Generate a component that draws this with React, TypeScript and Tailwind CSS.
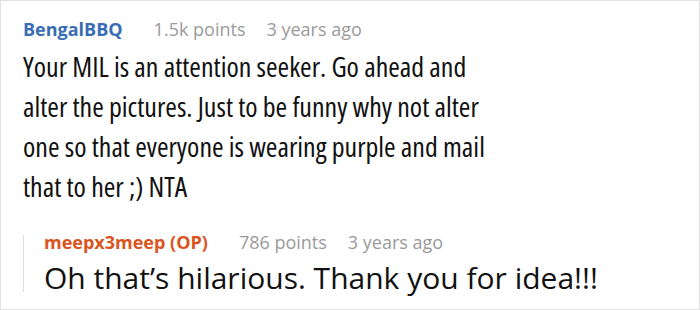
import React from "react";

export default function App() {
  return (
    <div className="w-[700px] h-[310px] bg-white border border-[#e2e2e2] pl-[22px] pt-[16px] overflow-hidden" style={{ fontFamily: '"Open Sans", "Noto Sans", sans-serif' }}>
      <div className="flex items-baseline text-[18px] leading-[24px]">
        <span className="font-bold text-[#3a6cb4]">BengalBBQ</span>
        <span className="ml-[31px] text-[#9a9a9a]">1.5k points</span>
        <span className="ml-[21px] text-[#9a9a9a]">3 years ago</span>
      </div>
      <p className="text-[28px] leading-[40px] text-[#111] [font-stretch:80%] w-[485px] mt-[5px]">
        Your MIL is an attention seeker. Go ahead and alter the pictures. Just to be funny why not alter one so that everyone is wearing purple and mail that to her ;) NTA
      </p>
      <div className="mt-[36px] border-l border-[#dedede] pl-[20px]">
        <div className="flex items-baseline text-[18px] leading-[14px] -mt-[7px]">
          <span className="font-bold text-[#d9541e]">meepx3meep (OP)</span>
          <span className="ml-[31px] text-[#9a9a9a]">786 points</span>
          <span className="ml-[21px] text-[#9a9a9a]">3 years ago</span>
        </div>
        <p className="text-[30px] leading-[28px] text-[#111] mt-[15px]">Oh that’s hilarious. Thank you for idea!!!</p>
      </div>
    </div>
  );
}
